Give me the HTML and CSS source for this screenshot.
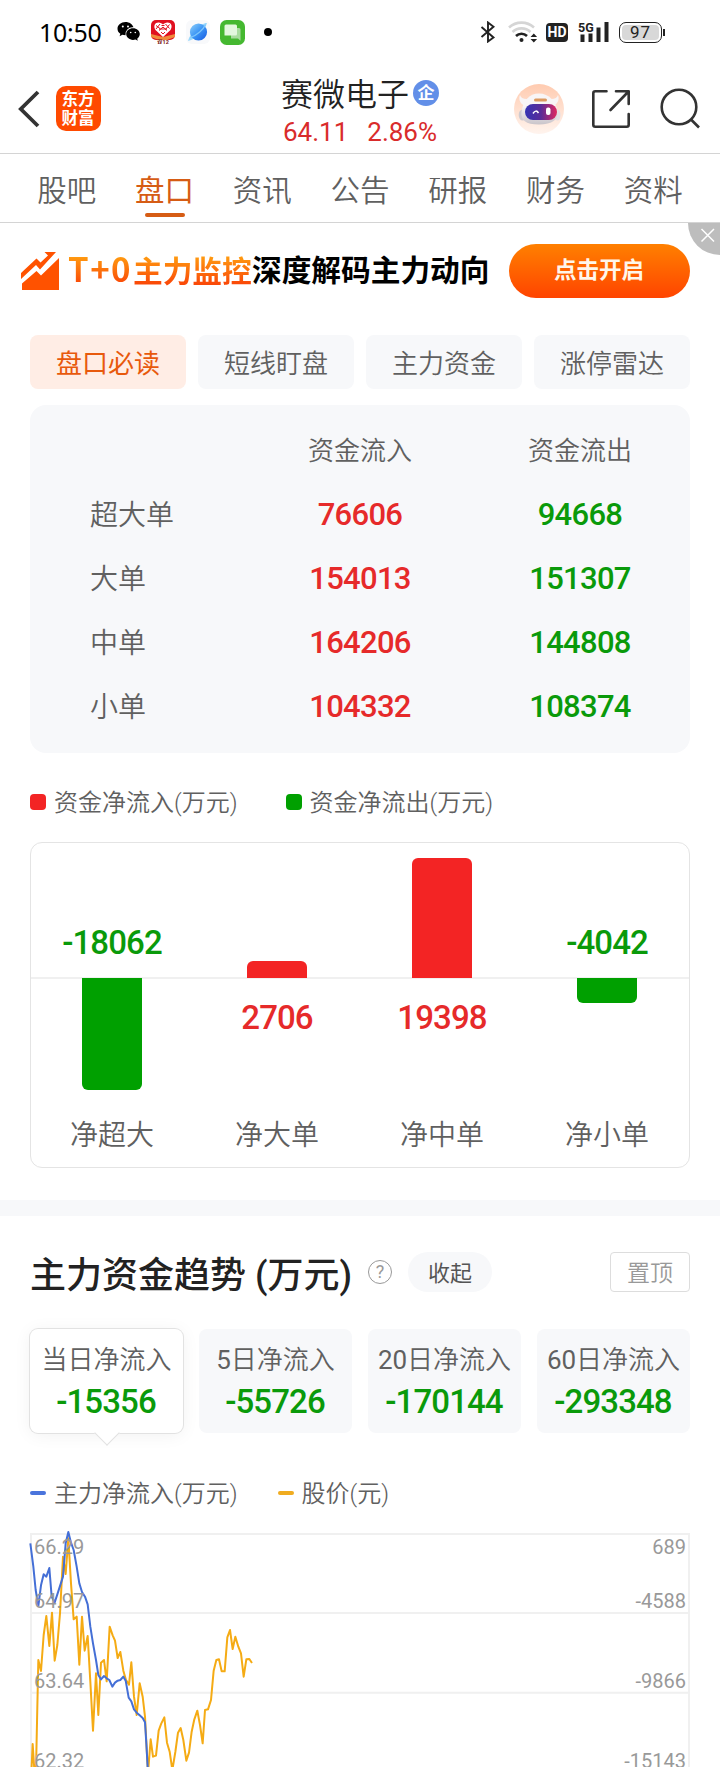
FILE: index.html
```html
<!DOCTYPE html>
<html lang="zh-CN">
<head>
    <meta charset="UTF-8">
    <meta name="viewport" content="width=device-width, initial-scale=1.0">
    <title>赛微电子 - 盘口</title>
    <link rel="stylesheet" href="styles.css">
</head>
<body>
    <div class="status-bar">
        <span class="time">10:50</span>
        <svg class="wechat" width="24" height="22" viewBox="0 0 24 22">
            <path d="M8.500 1C4 1 .5 4 .5 7.700c0 2.100 1.100 3.900 2.800 5.100L2.600 15.200l2.800-1.400c1 .3 2 .4 3.100.4A7 7 0 0 1 16.500 6.300C15.500 3.200 12.300 1 8.500 1z"/>
            <path d="M16 7.300c-3.800 0-6.800 2.600-6.800 5.800s3 5.800 6.800 5.800c.9 0 1.700-.1 2.500-.4l2.300 1.200-.6-2c1.600-1.100 2.600-2.700 2.600-4.600 0-3.200-3-5.800-6.800-5.800z"/>
            <g fill="#fff"><circle cx="5.800" cy="5.500" r="1"/><circle cx="11" cy="5.500" r="1"/><circle cx="13.700" cy="11.500" r=".8"/><circle cx="18.300" cy="11.500" r=".8"/></g>
        </svg>
        <svg class="app-heart" width="24" height="24" viewBox="0 0 24 24">
            <rect width="24" height="20" rx="5" fill="#e01020"/>
            <path d="M0 14l12 3 12-3v3l-8 3H8l-8-3z" fill="#f08a3c"/>
            <path d="M12 17L4.500 10C2 6 4 2.500 7.500 2.500c2 0 3.500 1 4.500 2 1-1 2.500-2 4.500-2C20 2.500 22 6 19.500 10z" fill="#fff"/>
            <path d="M5 5.500l4 3m0-4.500L5 9m5.500-3.500h3M14.500 4l4 4.500m0-4l-4 5M8 10.500l4-3.500 4 3.500m-6 1.500l2 2 2-2m-6-3h8" stroke="#e01020" stroke-width="1" fill="none"/>
            <text x="12" y="23.500" text-anchor="middle" class="heart-text">双12</text>
        </svg>
        <svg class="app-planet" width="24" height="24" viewBox="0 0 24 24">
            <defs>
                <linearGradient id="planet" x1="0" y1="0" x2="1" y2="1"><stop offset="0" stop-color="#8fd0fa"/><stop offset=".5" stop-color="#3a94f5"/><stop offset="1" stop-color="#1658e0"/></linearGradient>
            </defs>
            <rect width="24" height="24" rx="6" fill="#f8f9fb"/>
            <path d="M2 21C8 20 19 12 21 3c-4-1-17 9-19 18z" fill="#9ad8fb"/>
            <circle cx="12.500" cy="12" r="8.600" fill="url(#planet)"/>
            <path d="M4.500 17.500C11 15 17.500 9.500 19.500 4.500" stroke="#7cc4fb" stroke-width="1.300" fill="none"/>
        </svg>
        <svg class="app-message" width="25" height="25" viewBox="0 0 25 25">
            <rect width="25" height="25" rx="6.500" fill="#45b830"/>
            <path d="M11 8h8a1.500 1.500 0 0 1 1.500 1.500v11.300L18 18.500h-7z" fill="#a9dc9f"/>
            <path d="M6 4.500h9.500A1.500 1.500 0 0 1 17 6v8a1.500 1.500 0 0 1-1.500 1.500H4.500V6A1.500 1.500 0 0 1 6 4.500z" fill="#e3f7de"/>
        </svg>
        <span class="more-dot"></span>
        <svg class="bluetooth" width="16" height="22" viewBox="0 0 16 22" fill="none" stroke="#222" stroke-width="1.900">
            <path d="M1.500 6l12 10.500L8 20.500v-19l5.500 4.200L1.500 16"/>
        </svg>
        <svg class="wifi" width="30" height="22" viewBox="0 0 30 22">
            <g fill="none" stroke-width="2.600">
                <path d="M1 6.500a18.500 18.500 0 0 1 25 0" stroke="#d5d5d5"/>
                <path d="M4.500 11a13 13 0 0 1 18 0" stroke="#d5d5d5"/>
                <path d="M8 15a8 8 0 0 1 11 0" stroke="#222"/>
            </g>
            <circle cx="13.500" cy="19" r="2" fill="#222"/>
            <path d="M22.500 16l3.300-3.600 3.300 3.600zM22.500 18l3.300 3.600 3.300-3.600z" fill="#222"/>
        </svg>
        <span class="hd">HD</span>
        <svg class="signal" width="32" height="24" viewBox="0 0 32 24" fill="#222">
            <text x="0" y="11.500" class="signal-text">5G</text>
            <rect x="2.500" y="14.500" width="4" height="7.500"/>
            <rect x="10.500" y="13.500" width="4" height="8.500"/>
            <rect x="18.500" y="7.500" width="4" height="14.500"/>
            <rect x="26.500" y="2" width="4" height="20"/>
        </svg>
        <span class="battery"><span class="battery-level">97</span></span>
        <span class="battery-tip"></span>
    </div>

    <div class="header">
        <div class="header-left">
            <svg class="back" width="22" height="38" viewBox="0 0 22 38" fill="none" stroke="#333" stroke-width="3.800">
                <path d="M20 2L2.800 19 20 36"/>
            </svg>
            <div class="logo"><span>东方</span><span>财富</span></div>
        </div>
        <div class="stock">
            <div class="stock-name">赛微电子<span class="badge">企</span></div>
            <div class="stock-price"><span>64.11</span><span>2.86%</span></div>
        </div>
        <div class="header-right">
            <svg width="50" height="50" viewBox="0 0 50 50">
                <defs>
                    <linearGradient id="face" x1="0" y1="0" x2="0" y2="1"><stop offset="0" stop-color="#ffcbb0"/><stop offset="1" stop-color="#fff4ee"/></linearGradient>
                    <linearGradient id="shell" x1="0" y1="0" x2="0" y2="1"><stop offset=".4" stop-color="#f8f5f6"/><stop offset="1" stop-color="#c9c4ca"/></linearGradient>
                    <linearGradient id="visor"><stop offset="0" stop-color="#3434b4"/><stop offset=".5" stop-color="#5a2c98"/><stop offset="1" stop-color="#e02860"/></linearGradient>
                </defs>
                <circle cx="25" cy="25" r="25" fill="url(#face)"/>
                <path d="M6 11c-2 5 1 10 6 11l6-8c-6 2-11 1-12-3zM44 11c2 5-1 10-6 11l-6-8c6 2 11 1 12-3z" fill="#f8f5f6"/>
                <ellipse cx="8.500" cy="31" rx="3.800" ry="5.500" fill="#cfcbd0"/>
                <ellipse cx="43.500" cy="31" rx="3" ry="5.500" fill="#e3e0e4"/>
                <path d="M25 9.500c10 0 17 8 18.500 18 .8 8-5 13-18.500 13S6.500 36 7.500 28C9 17 15 9.500 25 9.500z" fill="url(#shell)"/>
                <rect x="20" y="14.500" width="13" height="3" rx="1.500" fill="#dc9a60"/>
                <rect x="11" y="20" width="32" height="16" rx="8" fill="url(#visor)"/>
                <path d="M19 29.500q3-4.500 5.500-.5" stroke="#fff" stroke-width="1.500" fill="none"/>
                <rect x="32" y="23.500" width="4.500" height="7.500" rx="2" fill="#fff"/>
            </svg>
            <svg class="share" width="40" height="40" viewBox="0 0 40 40" fill="none" stroke="#333" stroke-width="2.600" stroke-linecap="round" stroke-linejoin="round">
                <path d="M15.500 2.300H4.300a2 2 0 0 0-2 2v31.400a2 2 0 0 0 2 2h31.400a2 2 0 0 0 2-2V25"/>
                <path d="M25 2.300h12.700V15M37 3L19.500 21"/>
            </svg>
            <svg class="search" width="42" height="42" viewBox="0 0 42 42" fill="none" stroke="#333" stroke-width="2.600">
                <circle cx="20" cy="19" r="17.300"/>
                <path d="M32 31.500l8 8"/>
            </svg>
        </div>
    </div>

    <div class="tabs">
        <span>股吧</span>
        <span class="active">盘口</span>
        <span>资讯</span>
        <span>公告</span>
        <span>研报</span>
        <span>财务</span>
        <span>资料</span>
    </div>

    <div class="banner">
        <svg class="banner-icon" width="38" height="38" viewBox="0 0 38 38" fill="#ff5200">
            <path d="M0 21L15.500 6.500l4 4L27 3.500 23.500 0H35L19 17.500l-4-4.500L0 27z"/>
            <path d="M38 6v32H1v-6.500L15.500 19l4.500 4.500z"/>
        </svg>
        <span class="banner-hot"><span class="t0">T+0</span>主力监控</span><span class="banner-text">深度解码主力动向</span>
        <span class="banner-btn">点击开启</span>
        <span class="banner-close">
            <svg width="32" height="32" viewBox="0 0 32 32" stroke="#fff" stroke-width="1.500"><path d="M13.500 6l12.500 12.500M26 6L13.500 18.500"/></svg>
        </span>
    </div>

    <div class="chips">
        <span class="active">盘口必读</span>
        <span>短线盯盘</span>
        <span>主力资金</span>
        <span>涨停雷达</span>
    </div>

    <div class="flow-table">
        <div class="row head"><span></span><span>资金流入</span><span>资金流出</span></div>
        <div class="row"><span>超大单</span><b class="red">76606</b><b class="green">94668</b></div>
        <div class="row"><span>大单</span><b class="red">154013</b><b class="green">151307</b></div>
        <div class="row"><span>中单</span><b class="red">164206</b><b class="green">144808</b></div>
        <div class="row"><span>小单</span><b class="red">104332</b><b class="green">108374</b></div>
    </div>

    <div class="legend">
        <span class="legend-item"><i class="square square-red"></i>资金净流入(万元)</span>
        <span class="legend-item"><i class="square square-green"></i>资金净流出(万元)</span>
    </div>

    <div class="bar-chart">
        <div class="col">
            <div class="up"><b class="green">-18062</b></div>
            <div class="down"><i class="bar bar-green" style="height: 112px"></i></div>
            <span>净超大</span>
        </div>
        <div class="col">
            <div class="up"><i class="bar bar-red" style="height: 17px"></i></div>
            <div class="down"><b class="red">2706</b></div>
            <span>净大单</span>
        </div>
        <div class="col">
            <div class="up"><i class="bar bar-red" style="height: 120px"></i></div>
            <div class="down"><b class="red">19398</b></div>
            <span>净中单</span>
        </div>
        <div class="col">
            <div class="up"><b class="green">-4042</b></div>
            <div class="down"><i class="bar bar-green" style="height: 25px"></i></div>
            <span>净小单</span>
        </div>
    </div>

    <div class="divider"></div>

    <div class="trend-head">
        <h2>主力资金趋势 (万元)</h2>
        <span class="help">?</span>
        <span class="fold">收起</span>
        <span class="pin">置顶</span>
    </div>

    <div class="cards">
        <div class="card active"><span>当日净流入</span><b>-15356</b></div>
        <div class="card"><span><em>5</em>日净流入</span><b>-55726</b></div>
        <div class="card"><span><em>20</em>日净流入</span><b>-170144</b></div>
        <div class="card"><span><em>60</em>日净流入</span><b>-293348</b></div>
    </div>

    <div class="legend line-legend">
        <span class="legend-item"><i class="dash dash-blue"></i>主力净流入(万元)</span>
        <span class="legend-item"><i class="dash dash-yellow"></i>股价(元)</span>
    </div>

    <svg class="line-chart" width="720" height="257" viewBox="0 0 720 257">
        <g fill="none" stroke="#f0f0f0" stroke-width="2">
            <path d="M31 257V24h658v233M31 103h658M31 182.800h658"/>
        </g>
        <!-- both series are plotted on a 3x grid -->
        <g transform="scale(.33333)" fill="none" stroke-width="6" stroke-linejoin="round">
            <path stroke="#f5ab14" d="M94 790L98 702L103 780L108 780L115 450L123 483L131 375L139 318L148 408L156 308L164 452L172 405L180 310L189 140L197 192L205 85L213 220L221 328L230 320L238 464L246 320L254 422L263 378L271 515L279 662L288 490L295 615L303 458L312 450L320 514L329 350L338 376L345 392L353 444L361 426L370 482L378 510L387 524L394 457L402 560L410 615L419 520L428 560L435 620L444 790L452 688L459 740L468 737L476 662L484 640L493 622L501 698L509 725L517 780L526 726L534 668L542 654L550 690L559 752L567 728L575 665L583 628L592 602L600 645L608 700L615 600L624 598L633 570L641 482L649 450L657 448L665 484L674 484L682 382L690 360L698 417L706 380L715 410L723 430L731 500L739 448L748 447L756 459"/>
            <path stroke="#446fd6" d="M91 100L100 170L107 240L115 288L123 226L131 193L139 200L148 174L155 260L164 277L172 253L189 200L197 100L205 66L213 98L221 120L230 170L238 220L246 246L255 260L263 283L271 350L279 400L288 450L295 495L303 508L312 498L320 505L328 510L337 530L345 518L353 512L361 510L370 500L377 512L386 563L394 574L402 598L410 608L419 616L428 624L435 637L439 700L444 790"/>
        </g>
        <g class="axis-left">
            <text x="34" y="44">66.29</text>
            <text x="34" y="98">64.97</text>
            <text x="34" y="178">63.64</text>
            <text x="34" y="258">62.32</text>
        </g>
        <g class="axis-right" text-anchor="end">
            <text x="686" y="44">689</text>
            <text x="686" y="98">-4588</text>
            <text x="686" y="178">-9866</text>
            <text x="686" y="258">-15143</text>
        </g>
    </svg>
</body>
</html>
```

FILE: styles.css
```css
* {
    box-sizing: border-box;
}
body {
    margin: 0;
    width: 720px;
    height: 1767px;
    overflow: hidden;
    background-color: #fff;
    color: #606060;
    font-family: Roboto, "Noto Sans CJK SC", sans-serif;
    font-weight: 350;
}
svg {
    display: block;
    flex: none;
}
i {
    display: block;
}
b {
    font-weight: 500;
}
em {
    font-style: normal;
    font-weight: 400;
}
.red {
    color: #e62a2a;
}
.green {
    color: #0a9a0a;
}

/* status bar */
.status-bar {
    display: flex;
    align-items: center;
    height: 64px;
    padding-left: 39px;
    color: #000;
}
.time {
    width: 78px;
    font-family: "Noto Sans", sans-serif;
    font-size: 25px;
    font-weight: 400;
    letter-spacing: -0.3px;
}
.app-heart {
    margin-left: 10px;
}
.heart-text {
    font-size: 5.5px;
    font-weight: 700;
    fill: #7c1410;
}
.app-planet {
    margin-left: 11px;
}
.app-message {
    margin-left: 10px;
}
.more-dot {
    width: 8px;
    height: 8px;
    margin-left: 19px;
    border-radius: 50%;
    background-color: #000;
}
.bluetooth {
    margin-left: 208px;
}
.wifi {
    margin-left: 12px;
}
.hd {
    width: 22px;
    height: 19px;
    margin-left: 8px;
    border-radius: 4px;
    background-color: #222;
    color: #fff;
    font-size: 14px;
    font-weight: 700;
    line-height: 19px;
    text-align: center;
}
.signal {
    margin-left: 10px;
}
.signal-text {
    font-size: 12.5px;
    font-weight: 700;
}
.battery {
    width: 43px;
    height: 21px;
    margin-left: 9px;
    padding: 2px;
    border: 1.5px solid #222;
    border-radius: 7px;
}
.battery-level {
    display: block;
    height: 15px;
    border-radius: 4px;
    background-color: #d8d8d8;
    color: #222;
    font-size: 17px;
    font-weight: 400;
    line-height: 15px;
    letter-spacing: 1px;
    text-align: center;
}
.battery-tip {
    width: 2px;
    height: 7px;
    margin-left: 1px;
    background-color: #222;
}

/* header */
.header {
    display: grid;
    grid-template-columns: 220px 280px 220px;
    height: 90px;
    border-bottom: 1px solid #d4d4d4;
}
.header-left {
    display: flex;
    align-items: flex-start;
    padding: 22px 0 0 18px;
}
.back {
    margin-top: 4px;
}
.logo {
    display: flex;
    flex-direction: column;
    align-items: center;
    justify-content: center;
    width: 45px;
    height: 45px;
    margin-left: 15.5px;
    border-radius: 10px;
    background-color: #ff4a00;
    color: #fff;
    font-size: 16.5px;
    font-weight: 700;
    line-height: 19px;
}
.stock {
    padding-top: 8px;
}
.stock-name {
    display: flex;
    align-items: center;
    justify-content: center;
    height: 40px;
    color: #222;
    font-size: 32px;
}
.badge {
    width: 26px;
    height: 26px;
    margin: 1px 0 0 4px;
    border-radius: 50%;
    background-color: #628fe8;
    color: #fff;
    font-size: 17px;
    font-weight: 700;
    line-height: 26px;
    text-align: center;
}
.stock-price {
    display: flex;
    justify-content: center;
    gap: 19px;
    padding-top: 2px;
    color: #d92b2b;
    font-size: 26px;
    font-weight: 400;
    line-height: 36px;
}
.header-right {
    display: flex;
    align-items: flex-start;
    padding: 20px 0 0 14px;
}
.share {
    margin: 5px 0 0 27px;
}
.search {
    margin: 4px 0 0 28px;
}

/* tabs */
.tabs {
    display: grid;
    grid-template-columns: repeat(7, 1fr);
    height: 69px;
    padding: 0 18px;
    border-bottom: 1px solid #d4d4d4;
    font-size: 29.5px;
    line-height: 74px;
    text-align: center;
}
.tabs .active {
    color: #d65c14;
    font-weight: 400;
}
.tabs .active::after {
    content: "";
    display: block;
    width: 40px;
    height: 4px;
    margin: -15px auto 0;
    border-radius: 2px;
    background-color: #d65c14;
}

/* banner */
.banner {
    position: relative;
    display: flex;
    align-items: center;
    height: 96px;
    padding-left: 21px;
    font-size: 29.7px;
    font-weight: 700;
    line-height: 40px;
    white-space: nowrap;
}
.banner-icon {
    margin-right: 9px;
}
.banner-hot {
    width: 184px;
    margin-bottom: 2px;
    background-image: linear-gradient(#ff9a10 20%, #fa4a08 80%);
    -webkit-background-clip: text;
    background-clip: text;
    color: transparent;
}
.t0 {
    display: inline-block;
    width: 65px;
    font-family: "Noto Sans CJK SC", sans-serif;
    font-size: 33px;
    letter-spacing: 1.5px;
}
.banner-text {
    margin-bottom: 1px;
    color: #000;
}
.banner-btn {
    width: 181px;
    height: 54px;
    margin-left: 19px;
    border-radius: 27px;
    background-image: linear-gradient(#ff8000, #ff4400);
    color: #fff6ea;
    font-size: 22.5px;
    line-height: 53px;
    text-align: center;
}
.banner-close {
    position: absolute;
    top: 0;
    right: 0;
    width: 32px;
    height: 32px;
    border-bottom-left-radius: 32px;
    background-color: #bdbdbd;
}

/* sub tabs */
.chips {
    display: grid;
    grid-template-columns: repeat(4, 1fr);
    gap: 12px;
    margin: 16px 30px 0;
}
.chips span {
    height: 54px;
    border-radius: 8px;
    background-color: #f7f8fa;
    font-size: 26px;
    line-height: 58px;
    text-align: center;
}
.chips .active {
    background-color: #ffede5;
    color: #e8590c;
    font-weight: 400;
}

/* in / out table */
.flow-table {
    height: 348px;
    margin: 16px 30px 0;
    padding-top: 13px;
    border-radius: 16px;
    background-color: #f7f8fa;
}
.row {
    display: grid;
    grid-template-columns: repeat(3, 1fr);
    height: 64px;
    font-size: 28px;
    line-height: 67px;
    text-align: center;
}
.row span:first-child {
    padding-left: 60px;
    text-align: left;
}
.row.head {
    font-size: 26px;
    line-height: 66px;
}
.row b {
    font-size: 31px;
    line-height: 65px;
    letter-spacing: -0.7px;
}

/* legends */
.legend {
    display: flex;
    gap: 48px;
    margin: 32px 30px 0;
    font-size: 24px;
    line-height: 37px;
    height: 36px;
}
.legend-item {
    display: flex;
    align-items: center;
}
.square {
    width: 16px;
    height: 16px;
    margin: -3px 8px 0 0;
    border-radius: 4px;
}
.square-red,
.bar-red {
    background-color: #f32424;
}
.square-green,
.bar-green {
    background-color: #00a000;
}

/* bar chart */
.bar-chart {
    display: grid;
    grid-template-columns: repeat(4, 165px);
    height: 326px;
    margin: 21px 30px 0;
    border: 1px solid #e4e4e4;
    border-radius: 12px;
    overflow: hidden;
}
.col {
    text-align: center;
}
.col b {
    font-size: 33px;
    line-height: 36px;
    letter-spacing: -0.9px;
}
.col span {
    display: block;
    padding-right: 3px;
    font-size: 28px;
    line-height: 42px;
}
.up,
.down {
    display: flex;
    flex-direction: column;
    align-items: center;
    padding-right: 3px;
}
.up {
    justify-content: flex-end;
    height: 134px;
}
.up b {
    margin-bottom: 16px;
}
.down {
    height: 138px;
    border-top: 2px solid #f0f0f0;
}
.down b {
    margin-top: 21px;
}
.bar {
    width: 60px;
}
.up .bar {
    margin-bottom: -1px;
    border-radius: 6px 6px 0 0;
}
.down .bar {
    margin-top: -1px;
    border-radius: 0 0 6px 6px;
}

.divider {
    height: 16px;
    margin-top: 32px;
    background-color: #f7f8fa;
}

/* trend section */
.trend-head {
    display: flex;
    align-items: center;
    height: 40px;
    margin: 36px 30px 0;
}
h2 {
    margin: 8px 0 0;
    color: #222;
    font-size: 36px;
    font-weight: 500;
    line-height: 40px;
    white-space: nowrap;
}
.help {
    width: 24px;
    height: 24px;
    margin-left: 16px;
    border: 1.5px solid #999;
    border-radius: 50%;
    color: #999;
    font-size: 18px;
    font-weight: 400;
    line-height: 22px;
    text-align: center;
}
.fold {
    width: 84px;
    height: 40px;
    margin-left: 16px;
    border-radius: 20px;
    background-color: #f7f8fa;
    color: #555;
    font-size: 22px;
    font-weight: 400;
    line-height: 43px;
    text-align: center;
}
.pin {
    width: 80px;
    height: 40px;
    margin-left: auto;
    border: 1px solid #ddd;
    border-radius: 4px;
    color: #999;
    font-size: 23px;
    line-height: 41px;
    text-align: center;
}
.cards {
    display: grid;
    grid-template-columns: repeat(4, 1fr);
    gap: 16px;
    margin: 37px 30px 0;
}
.card {
    position: relative;
    height: 104px;
    padding-top: 12px;
    border-radius: 8px;
    background-color: #f7f8fa;
    text-align: center;
    white-space: nowrap;
}
.card span {
    display: block;
    font-size: 26px;
    line-height: 38px;
}
.card b {
    display: block;
    padding-right: 1px;
    color: #0a9a0a;
    font-size: 33px;
    line-height: 46px;
    letter-spacing: -0.9px;
}
.card.active {
    background-color: #fff;
    box-shadow: 0 0 0 1px #e2e2e2, 0 2px 18px rgba(0, 0, 0, 0.06);
}
.card.active::after {
    content: "";
    position: absolute;
    left: 68px;
    bottom: -9px;
    width: 17px;
    height: 17px;
    border: solid #e2e2e2;
    border-width: 0 1px 1px 0;
    background-color: #fff;
    transform: rotate(45deg);
}
.line-legend {
    gap: 40px;
    margin-top: 43px;
}
.dash {
    width: 16px;
    height: 4px;
    margin: -2px 8px 0 0;
    border-radius: 2px;
}
.dash-blue {
    background-color: #4a74dc;
}
.dash-yellow {
    background-color: #f0ac20;
}
.line-chart {
    margin-top: -2px;
}
.line-chart text {
    fill: #999;
    font-size: 20px;
    font-weight: 400;
}
```
